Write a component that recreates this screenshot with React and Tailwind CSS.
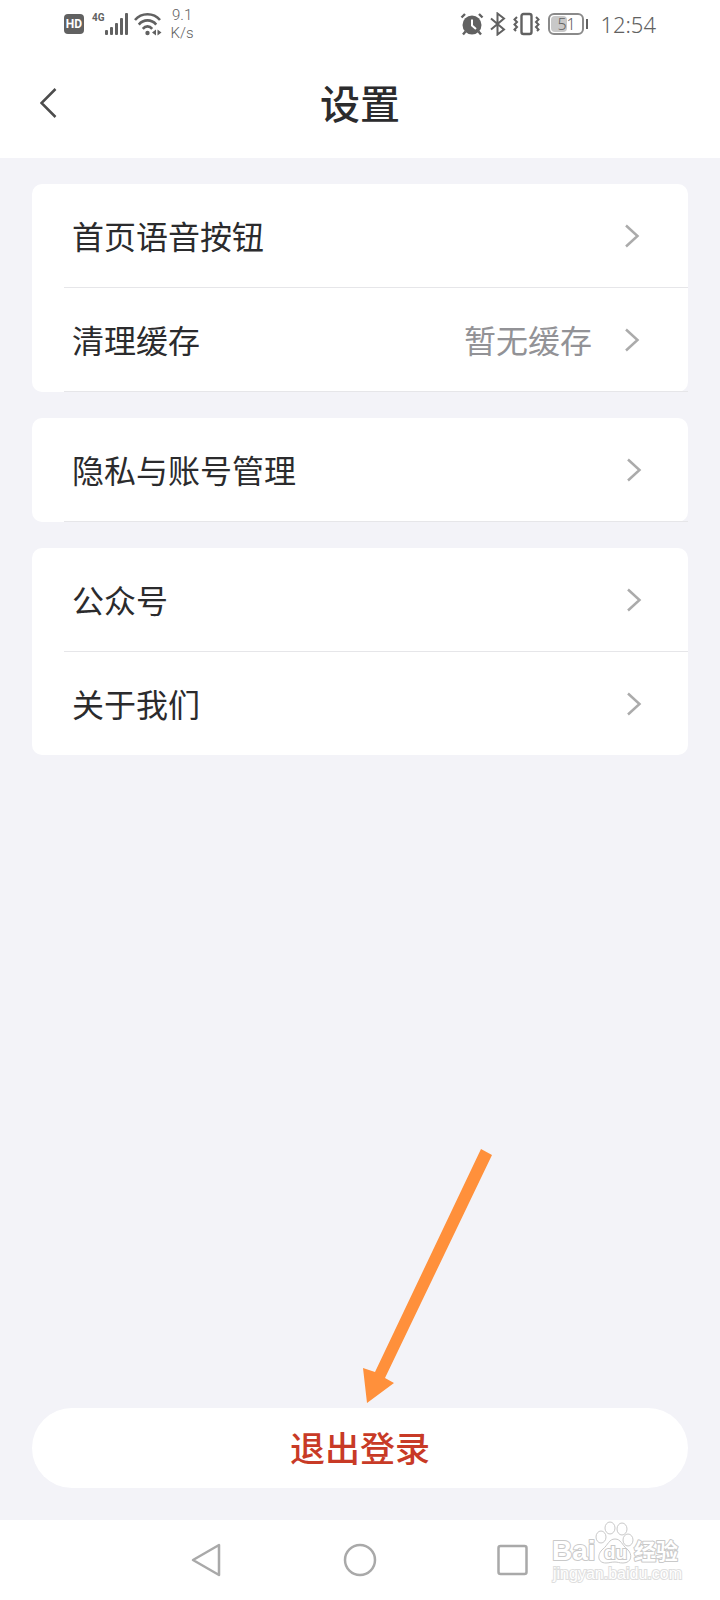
// setting groups, one card each
const groups = [
  {
    pad: 'pr-12',
    rows: [
      { label: '首页语音按钮' },
      { label: '清理缓存', value: '暂无缓存' },
    ],
  },
  {
    pad: 'pr-[46px]',
    rows: [{ label: '隐私与账号管理' }],
  },
  {
    pad: 'pr-[46px]',
    last: true,
    rows: [{ label: '公众号' }, { label: '关于我们' }],
  },
];

function StatusBar() {
  return (
    <div className="flex h-12 items-center justify-between pl-16 pr-16 text-[#616161]">
      {/* network */}
      <div className="flex items-center">
        <span className="flex h-5 w-5 items-center justify-center rounded bg-[#616161] font-[Roboto] text-[12px] font-bold leading-none text-white">
          HD
        </span>
        <span className="ml-2 mb-3 font-[Roboto] text-[10px] font-bold leading-3">4G</span>
        <svg width="24" height="24" viewBox="0 0 24 24" fill="currentColor" aria-hidden="true">
          <rect x="0" y="18" width="3" height="5" rx="1" />
          <rect x="5" y="15" width="3" height="8" rx="1" />
          <rect x="10" y="11" width="3" height="12" rx="1" />
          <rect x="15" y="6" width="3" height="17" rx="1" />
          <rect x="20" y="1" width="3" height="22" rx="1" />
        </svg>
        <svg className="ml-1" width="30" height="24" viewBox="0 0 30 24" fill="none" stroke="currentColor" strokeWidth="2.6" aria-hidden="true">
          <path d="M2 8 C8.500 .4 20.500 .4 27 8" />
          <path d="M5.800 12.600 C10.500 7 18.500 7 23.200 12.600" />
          <path d="M9.800 16.800 C12.500 13.600 16.500 13.600 19.200 16.800" />
          <circle cx="14.500" cy="21" r="2.200" fill="currentColor" stroke="none" />
          <path d="M19 20.500 l4 -3 v6z M28.500 20.500 l-4 -3 v6z" fill="currentColor" stroke="none" />
        </svg>
        <span className="ml-2 text-center font-[Roboto] text-[15px] font-light leading-[18px]">
          9.1
          <br />
          K/s
        </span>
      </div>

      {/* device */}
      <div className="flex items-center">
        <svg width="24" height="24" viewBox="0 0 24 24" fill="none" stroke="currentColor" aria-hidden="true">
          <circle cx="12" cy="13" r="9.500" fill="currentColor" stroke="none" />
          <path d="M1.500 5.500 L5 2 M22.500 5.500 L19 2 M5.500 19.500 L3 22.500 M18.500 19.500 L21 22.500" strokeWidth="2.400" />
          <path d="M12 7.500 V13.500 L16 17" stroke="#fff" strokeWidth="2" />
        </svg>
        <svg className="ml-1" width="20" height="24" viewBox="0 0 20 24" fill="none" stroke="currentColor" strokeWidth="2" aria-hidden="true">
          <path d="M3 6.500 L16 17.500 L9.500 22.500 V1.500 L16 6.500 L3 17.500" />
        </svg>
        <svg className="ml-1" width="30" height="24" viewBox="0 0 30 24" fill="none" stroke="currentColor" strokeWidth="2" aria-hidden="true">
          <rect x="9.500" y="2" width="10" height="20" rx="2" strokeWidth="2.400" />
          <path d="M5 5 L2.500 7.500 L5 10 L2.500 12.500 L5 15 L2.500 17.500 L4 19 M24 5 L26.500 7.500 L24 10 L26.500 12.500 L24 15 L26.500 17.500 L25 19" />
        </svg>
        <span className="ml-1.5 flex h-[22px] w-9 rounded-md border-2 border-[#8a8a8a] p-px">
          <span className="flex h-full w-4 items-center rounded-sm bg-[#c8c8c8] pl-1.5 font-['Noto_Sans'] text-[16px] font-light leading-none">
            51
          </span>
        </span>
        <span className="ml-0.5 h-2.5 w-0.5 bg-[#616161]" />
        <span className="ml-3 font-['Noto_Sans'] text-[22px] font-light leading-6">12:54</span>
      </div>
    </div>
  );
}

function Row({ row, pad, line }) {
  return (
    <li className={line ? 'border-b border-[#e6e6e9]' : ''}>
      <a href="#" className={`flex h-[103px] items-center pl-2 ${pad}`}>
        <span className="flex-1 pt-1">{row.label}</span>
        {row.value && <span className="mr-8 pt-1 text-[#929296]">{row.value}</span>}
        <svg width="16" height="24" viewBox="0 0 16 24" fill="none" stroke="#ababab" strokeWidth="2.500" aria-hidden="true">
          <path d="M2 1.500 L13.500 12 L2 22.500" />
        </svg>
      </a>
    </li>
  );
}

function Watermark() {
  return (
    <svg
      className="absolute right-10 bottom-4 overflow-visible"
      width="130"
      height="64"
      viewBox="0 0 130 64"
      fill="#fff"
      stroke="#c9c9c9"
      strokeWidth="1"
      role="img"
      aria-label="Baidu 经验"
    >
      <g paintOrder="stroke" strokeWidth="2" strokeLinejoin="round" fontWeight="bold">
        <text x="2" y="40" fontFamily="Liberation Sans, sans-serif" fontSize="28">Bai</text>
        <text x="84" y="39" fontFamily="Noto Sans CJK SC, sans-serif" fontSize="22">经验</text>
      </g>
      <ellipse cx="51" cy="17" rx="5" ry="6" />
      <ellipse cx="60" cy="8" rx="5" ry="6" />
      <ellipse cx="72" cy="9" rx="5" ry="6" />
      <ellipse cx="78" cy="20" rx="5" ry="6" />
      <path d="M65 19 C71 19 72 25 77 29 C83 34 82 43 73 43 C69 43 68 42 65 42 C61 42 59 43 56 43 C47 43 47 34 53 29 C58 25 59 19 65 19Z" />
      <text x="54" y="39" fontFamily="Liberation Sans, sans-serif" fontSize="19" fontWeight="bold" paintOrder="stroke" strokeWidth="2">du</text>
      <text x="3" y="59" fontFamily="Liberation Sans, sans-serif" fontSize="16" paintOrder="stroke" strokeWidth="2" stroke="#dedede">
        jingyan.baidu.com
      </text>
    </svg>
  );
}

export default function App() {
  return (
    <div className="flex min-h-screen flex-col bg-[#f3f3f8] font-['Liberation_Sans','Noto_Sans_CJK_SC',sans-serif] text-[#2b2b2d]">
      {/* header */}
      <header className="bg-white">
        <StatusBar />
        <div className="grid h-[110px] grid-cols-[80px_1fr_80px] items-center">
          <button type="button" aria-label="返回" className="flex h-full items-center pl-10">
            <svg width="18" height="32" viewBox="0 0 18 32" fill="none" stroke="#4c4c4c" strokeWidth="2.500" aria-hidden="true">
              <path d="M15.500 2 L1.500 16 L15.500 30" />
            </svg>
          </button>
          <h1 className="pt-1 text-center text-[40px] font-medium leading-[48px]">设置</h1>
        </div>
      </header>

      {/* settings */}
      <main className="flex flex-1 flex-col px-8 pt-[26px] pb-8">
        <div className="flex flex-col gap-[26px] text-[32px] leading-10">
          {groups.map((group, idx) => (
            <ul key={idx} className="rounded-[10px] bg-white pl-8">
              {group.rows.map((row, i) => (
                <Row
                  key={row.label}
                  row={row}
                  pad={group.pad}
                  line={!group.last || i < group.rows.length - 1}
                />
              ))}
            </ul>
          ))}
        </div>

        {/* log out */}
        <div className="relative mt-auto">
          <button
            type="button"
            className="h-20 w-full rounded-full bg-white pt-1 text-[35px] font-medium leading-10 text-[#c83a26]"
          >
            退出登录
          </button>
          <svg className="pointer-events-none absolute bottom-21 left-1/2" width="140" height="256" viewBox="0 0 140 256" fill="#ff903b" aria-hidden="true">
            <path d="M121 1 L132 7 L25 230 L34 235 L7 255 L3 220 L15 224Z" />
          </svg>
        </div>
      </main>

      {/* system navigation */}
      <nav className="relative h-20 bg-white">
        <div className="mx-auto grid h-full w-[64%] grid-cols-3 place-items-center">
          <button type="button" aria-label="返回上一级">
            <svg width="34" height="34" viewBox="0 0 34 34" fill="none" stroke="#a9a9a9" strokeWidth="2.500" strokeLinejoin="round" aria-hidden="true">
              <path d="M4 17 L30 2 V32Z" />
            </svg>
          </button>
          <button type="button" aria-label="主屏幕">
            <svg width="34" height="34" viewBox="0 0 34 34" fill="none" stroke="#a9a9a9" strokeWidth="2.500" aria-hidden="true">
              <circle cx="17" cy="17" r="15" />
            </svg>
          </button>
          <button type="button" aria-label="最近任务">
            <svg width="34" height="34" viewBox="0 0 34 34" fill="none" stroke="#a9a9a9" strokeWidth="2.500" aria-hidden="true">
              <rect x="1.500" y="3" width="28" height="28" rx="2" />
            </svg>
          </button>
        </div>
        <Watermark />
      </nav>
    </div>
  );
}
